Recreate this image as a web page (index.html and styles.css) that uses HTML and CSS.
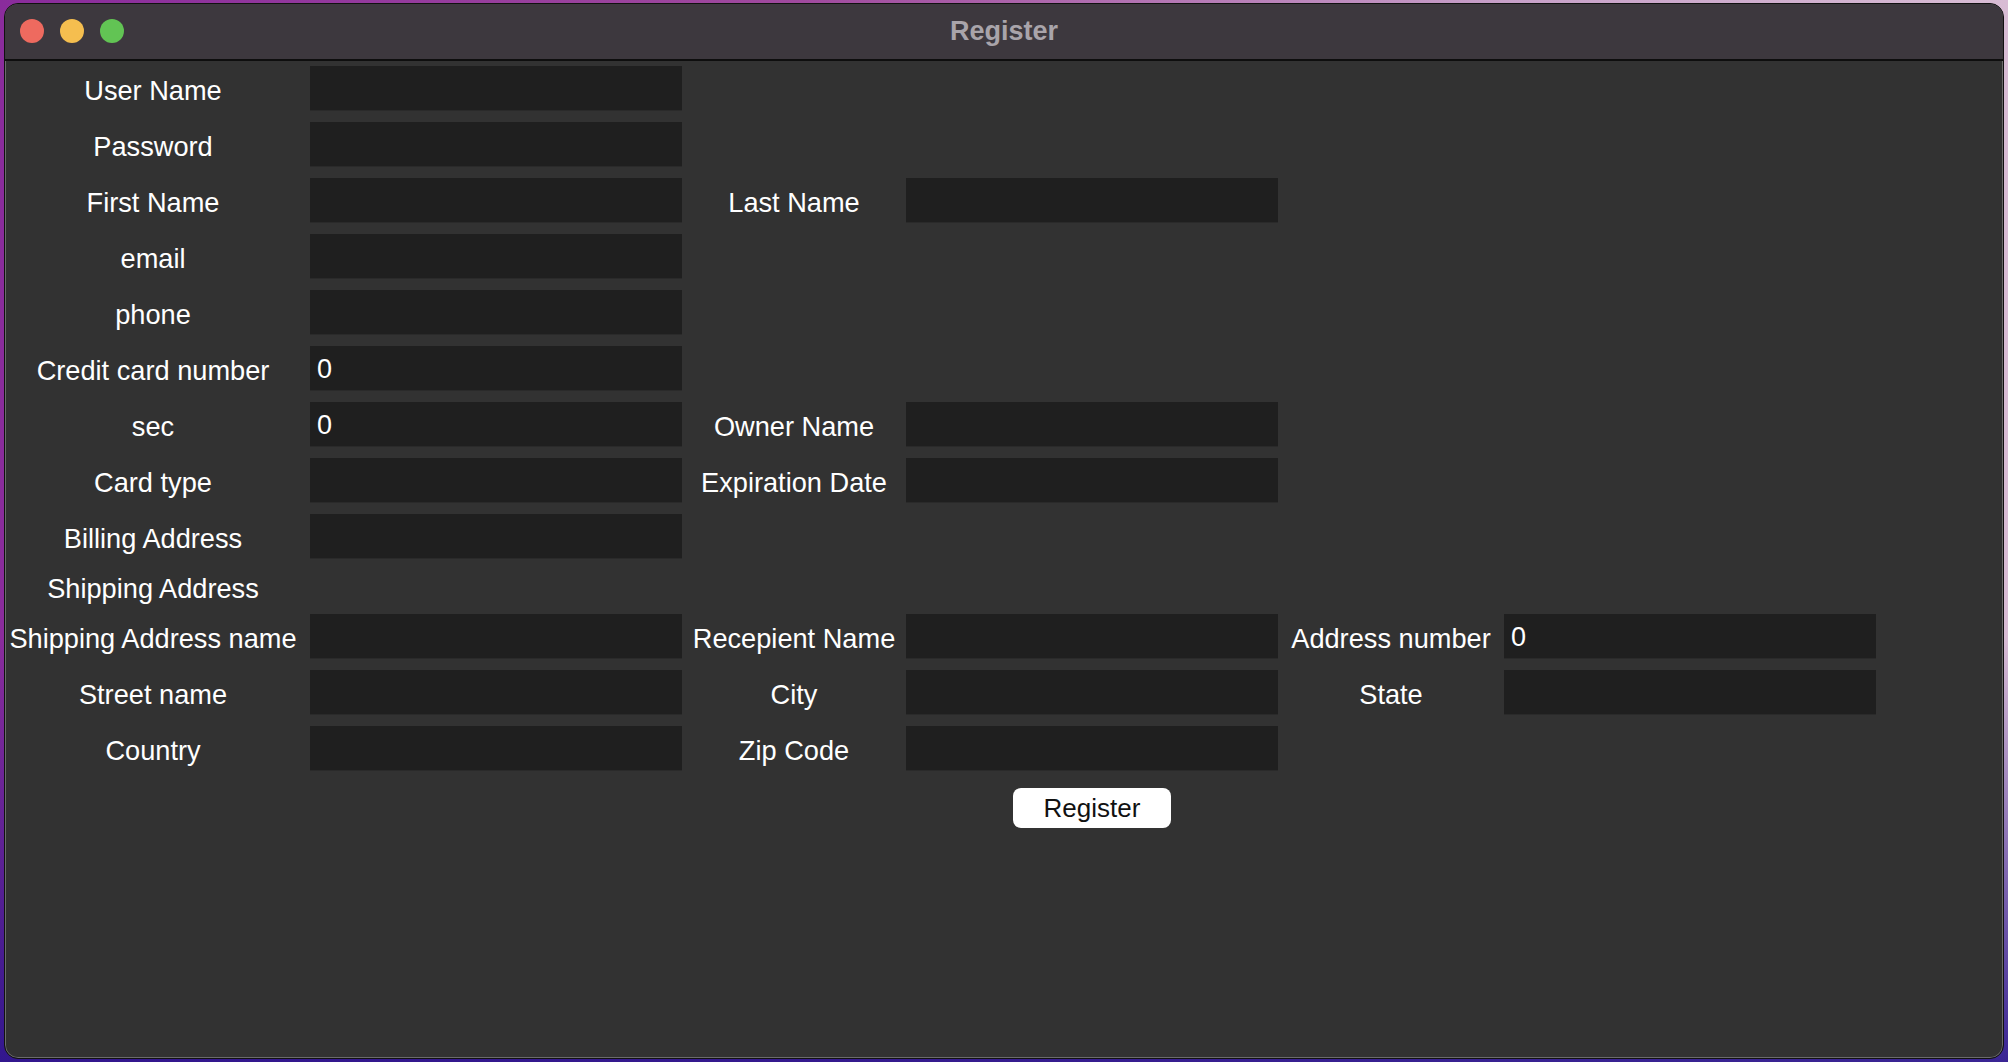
FILE: index.html
```html
<!DOCTYPE html>
<html>
<head>
<meta charset="utf-8">
<title>Register</title>
<link rel="stylesheet" href="styles.css">
</head>
<body>
<div class="window">
  <div class="titlebar">
    <div class="lights">
      <span class="light red"></span>
      <span class="light yellow"></span>
      <span class="light green"></span>
    </div>
    <div class="title">Register</div>
    <div class="spacer"></div>
  </div>
  <div class="content">
    <div class="form">
      <div class="label first">User Name</div><div class="field"></div>
      <div class="label first">Password</div><div class="field"></div>
      <div class="label first">First Name</div><div class="field"></div><div class="label">Last Name</div><div class="field"></div>
      <div class="label first">email</div><div class="field"></div>
      <div class="label first">phone</div><div class="field"></div>
      <div class="label first">Credit card number</div><div class="field">0</div>
      <div class="label first">sec</div><div class="field">0</div><div class="label">Owner Name</div><div class="field"></div>
      <div class="label first">Card type</div><div class="field"></div><div class="label">Expiration Date</div><div class="field"></div>
      <div class="label first">Billing Address</div><div class="field"></div>
      <div class="label first">Shipping Address</div>
      <div class="label first">Shipping Address name</div><div class="field"></div><div class="label">Recepient Name</div><div class="field"></div><div class="label">Address number</div><div class="field">0</div>
      <div class="label first">Street name</div><div class="field"></div><div class="label">City</div><div class="field"></div><div class="label">State</div><div class="field"></div>
      <div class="label first">Country</div><div class="field"></div><div class="label">Zip Code</div><div class="field"></div>
      <div class="btn-cell"><button class="btn">Register</button></div>
    </div>
  </div>
</div>
</body>
</html>
```

FILE: styles.css
```css
html, body {
  margin: 0;
  padding: 0;
}
body {
  width: 2008px;
  height: 1062px;
  box-sizing: border-box;
  padding: 3px 4px 3px 4px;
  background:
    linear-gradient(180deg, rgba(0,0,0,0) 60%, rgba(40,20,140,0.9) 100%),
    linear-gradient(90deg, #8a2c9c 0%, #a04a9e 40%, #c7a0c8 75%, #d8bcd4 100%);
  font-family: "Liberation Sans", Arial, sans-serif;
  overflow: hidden;
}
.window {
  width: 2000px;
  height: 1056px;
  box-sizing: border-box;
  border: 1px solid #111;
  border-radius: 14px;
  box-shadow: inset 0 0 0 1px rgba(255,255,255,0.28);
  background: #323232;
  overflow: hidden;
  display: flex;
  flex-direction: column;
}
.titlebar {
  height: 55px;
  flex: none;
  background: #3d383e;
  border-bottom: 2px solid #0e0e0e;
  display: grid;
  grid-template-columns: 1fr auto 1fr;
  align-items: center;
}
.lights {
  display: flex;
  gap: 16px;
  padding-left: 15px;
  padding-bottom: 1px;
}
.light {
  width: 24px;
  height: 24px;
  border-radius: 50%;
  display: block;
}
.red { background: #ee6a5f; }
.yellow { background: #f5be4f; }
.green { background: #62c454; }
.title {
  color: #a9a4aa;
  font-weight: bold;
  font-size: 27px;
  padding-bottom: 1px;
}
.content {
  flex: 1;
  padding-top: 5px;
}
.form {
  display: grid;
  grid-template-columns: 305px 372px 224px 372px 226px 372px;
  grid-template-rows: repeat(9, 44px) 32px repeat(3, 44px) 52px;
  row-gap: 12px;
}
.label {
  color: #ffffff;
  font-size: 27.2px;
  text-align: center;
  display: flex;
  align-items: center;
  justify-content: center;
  white-space: nowrap;
  padding-top: 5px;
  box-sizing: border-box;
}
.label.first {
  grid-column-start: 1;
  padding-right: 9px;
}
.field {
  background: #1f1f1f;
  box-shadow: 0 1px 0 #2a2a2a;
  color: #ffffff;
  font-size: 27px;
  display: flex;
  align-items: center;
  padding-left: 7px;
  padding-top: 3px;
  box-sizing: border-box;
}
.btn-cell {
  grid-column: 4;
  display: flex;
  align-items: center;
  justify-content: center;
}
.btn {
  width: 158px;
  height: 40px;
  border: none;
  border-radius: 8px;
  background: #ffffff;
  color: #111;
  font-family: "Liberation Sans", Arial, sans-serif;
  font-size: 26px;
  padding: 0;
}
```
